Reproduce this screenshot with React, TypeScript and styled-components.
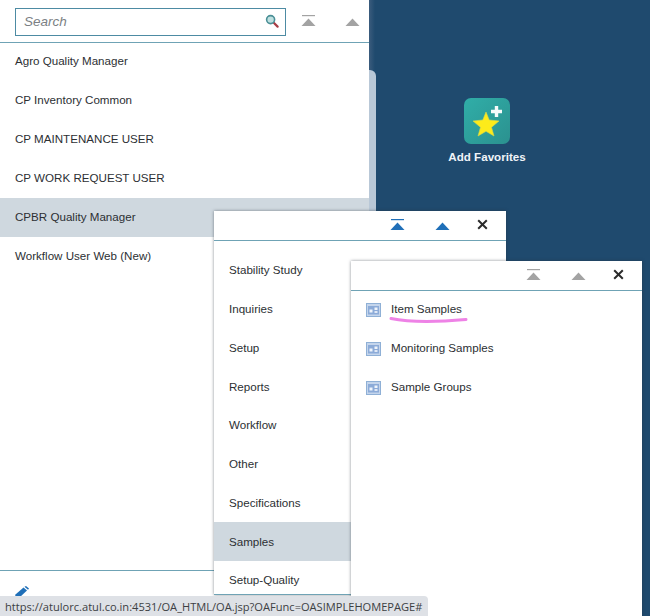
import React from "react";
import styled, { createGlobalStyle } from "styled-components";

const Global = createGlobalStyle`
  html, body { margin: 0; padding: 0; background: #1f4a6e; }
  body { font-family: "Liberation Sans", Arial, sans-serif; }
`;

const Desktop = styled.div`
  position: relative;
  width: 650px;
  height: 616px;
  overflow: hidden;
  background: #1f4a6e;
`;

const BackStrip = styled.div`
  position: absolute;
  left: 362px;
  top: 70px;
  width: 14px;
  height: 167px;
  border-radius: 0 6px 0 0;
  background: #b9c8d7;
`;

const Shade = styled.div`
  position: absolute;
  left: 369px;
  top: 0;
  width: 6px;
  height: 70px;
  background: linear-gradient(90deg, #3b5c7d, #1f4a6e);
`;

const RootPanel = styled.section`
  position: absolute;
  left: 0;
  top: 0;
  width: 369px;
  height: 616px;
  background: #fff;
  display: flex;
  flex-direction: column;
`;

const SearchBar = styled.header`
  flex: none;
  display: flex;
  align-items: flex-start;
  padding: 8px 0 0 15px;
  box-sizing: border-box;
  border-bottom: 1px solid #6fa3b5;
  height: 43px;
`;

const SearchField = styled.div`
  width: 271px;
  height: 28px;
  box-sizing: border-box;
  border: 1px solid #4d8ba3;
  display: flex;
  align-items: center;
  justify-content: space-between;
  padding: 0 6px 2px 8px;
  font-style: italic;
  font-size: 13.5px;
  color: #7b7f84;
`;

const HeaderIcons = styled.div`
  display: flex;
  align-items: center;
  gap: 29px;
  margin-left: 15px;
  height: 26px;
`;

const RowList = styled.div`
  flex: 1;
  margin-top: -1px;
  display: flex;
  flex-direction: column;
`;

const Row = styled.div<{ $active?: boolean }>`
  height: 39px;
  flex: none;
  box-sizing: border-box;
  display: flex;
  align-items: center;
  gap: 10px;
  padding: 0 0 3px 15px;
  font-size: 11.6px;
  color: #2c2f33;
  background: ${(p) => (p.$active ? "#cfd8df" : "transparent")};
`;

const MenuRow = styled(Row)`
  height: 38.75px;
  padding-bottom: 1px;
`;

const IconSlot = styled.span`
  display: flex;
  margin-top: 3px;
`;

const RootFooter = styled.footer`
  height: 46px;
  flex: none;
  border-top: 1px solid #6fa3b5;
  padding: 14px 0 0 14px;
  box-sizing: border-box;
`;

const Flyout = styled.section<{ $x: number; $y: number; $w: number; $h: number }>`
  position: absolute;
  left: ${(p) => p.$x}px;
  top: ${(p) => p.$y}px;
  width: ${(p) => p.$w}px;
  height: ${(p) => p.$h}px;
  box-sizing: border-box;
  background: #fff;
  box-shadow: 0 0 3px rgba(40, 50, 60, 0.55);
  display: flex;
  flex-direction: column;
  overflow: hidden;
`;

const FlyoutHeader = styled.header`
  height: 30px;
  flex: none;
  box-sizing: border-box;
  border-bottom: 1px solid #6fa3b5;
  display: flex;
  align-items: center;
  justify-content: flex-end;
  gap: 30px;
  padding: 0 18px 2px 0;
`;

const CloseSlot = styled.span`
  display: flex;
  margin-left: -3px;
`;

const FlyoutBody = styled.div`
  margin-top: -1px;
  display: flex;
  flex-direction: column;
`;

const MenuBody = styled.div`
  padding-top: 10px;
  flex: 1;
  overflow: hidden;
  display: flex;
  flex-direction: column;
`;

const FlyoutEdge = styled.div`
  height: 1px;
  flex: none;
  background: #6fa3b5;
`;

const Favorite = styled.div`
  position: absolute;
  left: 437px;
  top: 98px;
  width: 100px;
  display: flex;
  flex-direction: column;
  align-items: center;
  gap: 6px;
`;

const FavIcon = styled.div`
  width: 46px;
  height: 46px;
  border-radius: 7px;
  background: linear-gradient(135deg, #30aea8, #2b918f);
  display: flex;
`;

const FavLabel = styled.div`
  font-size: 11.6px;
  font-weight: 700;
  color: #f0f4f8;
  white-space: nowrap;
`;

const StatusBar = styled.div`
  position: absolute;
  left: 0;
  bottom: 0;
  height: 20px;
  width: 428px;
  box-sizing: border-box;
  padding-left: 5px;
  border-radius: 0 4px 0 0;
  background: #dee1e6;
  display: flex;
  align-items: center;
  font-family: "Open Sans", "Noto Sans", sans-serif;
  font-size: 11.1px;
  color: #3c4043;
  white-space: nowrap;
`;

const Underline = styled.svg`
  position: absolute;
  left: 388px;
  top: 316px;
`;

const FirstIcon = ({ color }: { color: string }) => (
  <svg width="15" height="12" viewBox="0 0 15 12">
    <rect x="1" y="0" width="13" height="1.2" fill={color} />
    <path d="M7.5 3.5 L14.5 11 H0.5 Z" fill={color} />
  </svg>
);

const UpIcon = ({ color }: { color: string }) => (
  <svg width="15" height="12" viewBox="0 0 15 12">
    <path d="M7.5 3.5 L14.5 11 H0.5 Z" fill={color} />
  </svg>
);

const CloseIcon = () => (
  <svg width="11" height="11" viewBox="0 0 11 11">
    <path d="M1.2 1.2 L9.8 9.8 M9.8 1.2 L1.2 9.8" stroke="#2b2b2b" strokeWidth="2" />
  </svg>
);

const SearchIcon = () => (
  <svg width="14" height="14" viewBox="0 0 14 14">
    <path d="M8.5 8.5 L12.6 12.6" stroke="#a83c44" strokeWidth="2.2" strokeLinecap="round" />
    <circle cx="5.6" cy="5.6" r="4" fill="#bfe0e0" stroke="#4a8f96" strokeWidth="1.6" />
  </svg>
);

const PencilIcon = () => (
  <svg width="17" height="13" viewBox="0 0 17 13">
    <path d="M0.5 13 L1.5 8.5 L9.5 1.5 L13 4.5 L5 12 Z" fill="#1f6fb8" />
    <path d="M10.5 0.7 L12 0 L15 2.4 L14 3.8 Z" fill="#1f6fb8" />
  </svg>
);

const FormIcon = () => (
  <svg width="15" height="14" viewBox="0 0 15 14">
    <rect x="0.5" y="0.5" width="14" height="13" fill="#c4d5ec" stroke="#8fb0d6" />
    <rect x="2" y="3" width="11" height="8.5" fill="#8cabd8" />
    <rect x="3.5" y="6.5" width="3" height="3" fill="#f0f5fb" />
    <rect x="8.5" y="4.5" width="3" height="2.5" fill="#f0f5fb" />
    <rect x="8.5" y="8" width="3" height="2" fill="#dfe8f5" />
  </svg>
);

const StarIcon = () => (
  <svg width="46" height="46" viewBox="0 0 46 46">
    <path
      d="M22 14 L25.2 22 L35 23 L27.5 29.3 L30 38 L22 33.3 L14 38 L16.5 29.3 L9 23 L18.8 22 Z"
      fill="#fdeb1a"
      stroke="#d8d84a"
      strokeWidth="0.6"
    />
    <path d="M27 11.8 H30.8 V8 H34.2 V11.8 H38 V15.2 H34.2 V19 H30.8 V15.2 H27 Z" fill="#f6fbfb" />
  </svg>
);

const roots = [
  "Agro Quality Manager",
  "CP Inventory Common",
  "CP MAINTENANCE USER",
  "CP WORK REQUEST USER",
  "CPBR Quality Manager",
  "Workflow User Web (New)",
];

const menu = [
  "Stability Study",
  "Inquiries",
  "Setup",
  "Reports",
  "Workflow",
  "Other",
  "Specifications",
  "Samples",
  "Setup-Quality",
];

const samples = ["Item Samples", "Monitoring Samples", "Sample Groups"];

export default function App() {
  return (
    <Desktop>
      <Global />
      <Shade />
      <BackStrip />
      <Favorite>
        <FavIcon>
          <StarIcon />
        </FavIcon>
        <FavLabel>Add Favorites</FavLabel>
      </Favorite>
      <RootPanel>
        <SearchBar>
          <SearchField>
            Search
            <SearchIcon />
          </SearchField>
          <HeaderIcons>
            <FirstIcon color="#a3a3a3" />
            <UpIcon color="#a3a3a3" />
          </HeaderIcons>
        </SearchBar>
        <RowList>
          {roots.map((r) => (
            <Row key={r} $active={r.startsWith("CPBR")}>
              {r}
            </Row>
          ))}
        </RowList>
        <RootFooter>
          <PencilIcon />
        </RootFooter>
      </RootPanel>
      <Flyout $x={214} $y={211} $w={292} $h={384}>
        <FlyoutHeader>
          <FirstIcon color="#1f6fb8" />
          <UpIcon color="#1f6fb8" />
          <CloseSlot>
            <CloseIcon />
          </CloseSlot>
        </FlyoutHeader>
        <MenuBody>
          {menu.map((m) => (
            <MenuRow key={m} $active={m === "Samples"}>
              {m}
            </MenuRow>
          ))}
        </MenuBody>
        <FlyoutEdge />
      </Flyout>
      <Flyout $x={351} $y={261} $w={291} $h={355}>
        <FlyoutHeader>
          <FirstIcon color="#a3a3a3" />
          <UpIcon color="#a3a3a3" />
          <CloseSlot>
            <CloseIcon />
          </CloseSlot>
        </FlyoutHeader>
        <FlyoutBody>
          {samples.map((s) => (
            <Row key={s}>
              <IconSlot>
                <FormIcon />
              </IconSlot>
              {s}
            </Row>
          ))}
        </FlyoutBody>
      </Flyout>
      <Underline width="82" height="10" viewBox="0 0 82 10">
        <path
          d="M3 2.5 C 20 6, 50 6, 78 3.5"
          stroke="#ee82e6"
          strokeWidth="3"
          fill="none"
          strokeLinecap="round"
        />
      </Underline>
      <StatusBar>https://atulorc.atul.co.in:4531/OA_HTML/OA.jsp?OAFunc=OASIMPLEHOMEPAGE#</StatusBar>
    </Desktop>
  );
}
